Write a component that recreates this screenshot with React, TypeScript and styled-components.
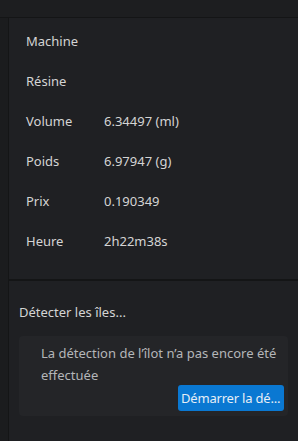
import React from "react";
import styled, { createGlobalStyle } from "styled-components";

const Global = createGlobalStyle`
  html, body { margin: 0; padding: 0; background: #1f2023; }
  body { font-family: "Noto Sans", "Open Sans", sans-serif; font-size: 13px; color: #d0d0d0; }
`;

const Page = styled.div`
  width: 298px;
  height: 441px;
  display: flex;
  flex-direction: column;
  overflow: hidden;
  background: #1f2023;
`;

const TopBar = styled.div`
  height: 17px;
  flex: none;
  background: #1d1e20;
  border-bottom: 1px solid #141516;
`;

const Body = styled.div`
  flex: 1;
  display: flex;
  min-height: 0;
`;

const SideStrip = styled.div`
  width: 8px;
  flex: none;
  background: #1b1c1e;
  border-right: 1px solid #141516;
`;

const Main = styled.div`
  flex: 1;
  display: flex;
  flex-direction: column;
`;

const Info = styled.div`
  display: flex;
  flex-direction: column;
  flex: none;
  padding: 3px 0 18px 17px;
  border-bottom: 2px solid #141516;
`;

const Row = styled.div`
  display: flex;
  align-items: center;
  flex: none;
  height: 40px;
  line-height: 20px;
`;

const Label = styled.span`
  width: 78px;
  flex: none;
  color: #d4d4d4;
`;

const Value = styled.span`
  color: #d4d4d4;
`;

const Lower = styled.div`
  display: flex;
  flex-direction: column;
  padding: 21px 10px 0 10px;
`;

const SectionTitle = styled.div`
  color: #d4d4d4;
  line-height: 20px;
  margin-bottom: 14px;
`;

const Card = styled.div`
  background: #242528;
  border-radius: 4px;
  padding: 6px 4px 5px 22px;
  display: flex;
  flex-direction: column;
`;

const Message = styled.div`
  color: #b4b6b9;
  line-height: 22px;
`;

const ButtonRow = styled.div`
  display: flex;
  justify-content: flex-end;
  margin-top: -1px;
`;

const Button = styled.button`
  width: 106px;
  height: 26px;
  border: none;
  border-radius: 3px;
  background: #0a78d2;
  color: #e6eef6;
  font-family: inherit;
  font-size: 13px;
  letter-spacing: -0.2px;
  padding: 0 2px 0 3px;
  white-space: nowrap;
  overflow: hidden;
  text-align: left;
`;

const rows: [string, string][] = [
  ["Machine", ""],
  ["Résine", ""],
  ["Volume", "6.34497 (ml)"],
  ["Poids", "6.97947 (g)"],
  ["Prix", "0.190349"],
  ["Heure", "2h22m38s"],
];

export default function App() {
  return (
    <Page>
      <Global />
      <TopBar />
      <Body>
        <SideStrip />
        <Main>
          <Info>
            {rows.map(([l, v]) => (
              <Row key={l}>
                <Label>{l}</Label>
                <Value>{v}</Value>
              </Row>
            ))}
          </Info>
          <Lower>
            <SectionTitle>Détecter les îles...</SectionTitle>
            <Card>
              <Message>La détection de l’îlot n’a pas encore été effectuée</Message>
              <ButtonRow>
                <Button>Démarrer la dé...</Button>
              </ButtonRow>
            </Card>
          </Lower>
        </Main>
      </Body>
    </Page>
  );
}
